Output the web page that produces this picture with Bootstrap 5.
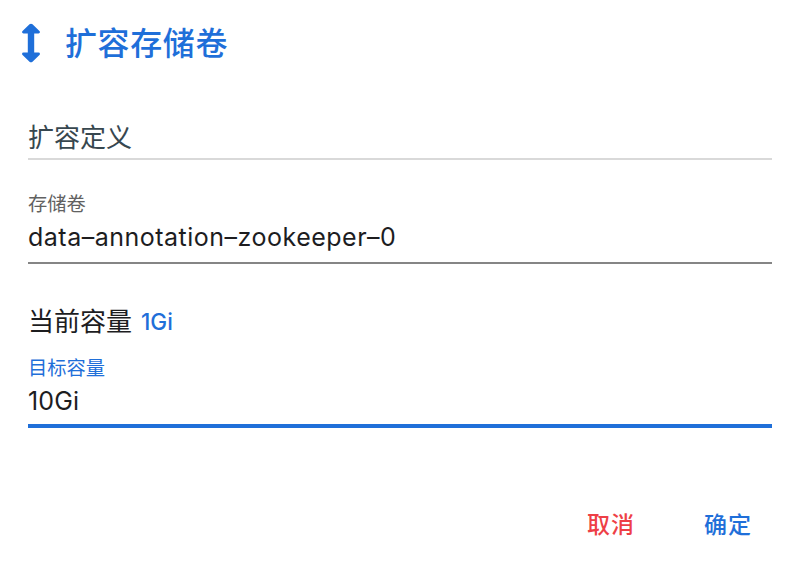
<!DOCTYPE html>
<html lang="zh-CN">
<head>
<meta charset="utf-8">
<meta name="viewport" content="width=device-width, initial-scale=1">
<title>扩容存储卷</title>
<link href="https://cdn.jsdelivr.net/npm/bootstrap@5.3.0/dist/css/bootstrap.min.css" rel="stylesheet">
<style>
body{font-family:"Inter","Noto Sans CJK SC",sans-serif;color:#1d1d1f;height:562px;overflow:hidden;background:#fff}
.dlg-head{height:86px;padding-left:21px}
.dlg-title{font-size:32px;line-height:48px;font-weight:500;letter-spacing:.6px;margin-left:24px;padding-top:1px}
.dlg-body{padding:30px 26px 0 28px}
.sect{font-size:26px;line-height:44px;height:44px;color:#37474f;border-bottom:2px solid #d9d9d9}
.f-group{padding-top:34px}
.f-group.next{padding-top:18px}
.f-label{font-size:19.3px;line-height:20px;height:22px;display:block;color:#616161}
.f-input{font-size:25px;line-height:38px;height:48px;padding:0 0 4px;border:0;border-bottom:2px solid #858585;border-radius:0;color:#1d1d1f;background:none;letter-spacing:.5px;outline:0}
.f-input.active-line{border-bottom:4px solid #1f6fd9;padding-bottom:2px;letter-spacing:.1px}
.cur{font-size:26px;line-height:36px;height:36px;margin-top:40px}
.cur-val{font-size:22.5px;font-weight:500;margin-left:9px}
.act{font-size:23px;line-height:34px;font-weight:500;padding:0;border:0;letter-spacing:1px}
.act-no{color:#ee3f46}
.dlg-foot{margin-top:80px;padding-right:46px;gap:69px}
.text-brand{color:#1f6fd9}
</style>
</head>
<body>
<header class="dlg-head d-flex align-items-center text-brand">
<svg width="20" height="40" viewBox="0 0 20 40" fill="currentColor"><path d="M8.500 1.300 1.300 8.300Q0.500 10.300 2.500 10.500H6.800V29.500H2.500Q0.500 29.700 1.300 31.700L8.500 38.700Q10 40 11.500 38.700L18.700 31.700Q19.500 29.700 17.500 29.500H13.200V10.500H17.500Q19.500 10.300 18.700 8.300L11.500 1.300Q10 0 8.500 1.300Z"/></svg>
<h1 class="dlg-title mb-0">扩容存储卷</h1>
</header>
<main class="dlg-body">
<h2 class="sect mb-0 fw-normal">扩容定义</h2>
<div class="f-group"><label class="f-label" for="vol">存储卷</label><input id="vol" class="f-input w-100 d-block" value="data–annotation–zookeeper–0"></div>
<div class="cur d-flex align-items-center"><span>当前容量</span><span class="cur-val text-brand">1Gi</span></div>
<div class="f-group next"><label class="f-label text-brand" for="cap">目标容量</label><input id="cap" class="f-input active-line w-100 d-block" value="10Gi"></div>
</main>
<footer class="dlg-foot d-flex justify-content-end"><button type="button" class="btn act act-no">取消</button><button type="button" class="btn act text-brand">确定</button></footer>
<script src="https://cdn.jsdelivr.net/npm/bootstrap@5.3.0/dist/js/bootstrap.bundle.min.js"></script>
</body>
</html>
